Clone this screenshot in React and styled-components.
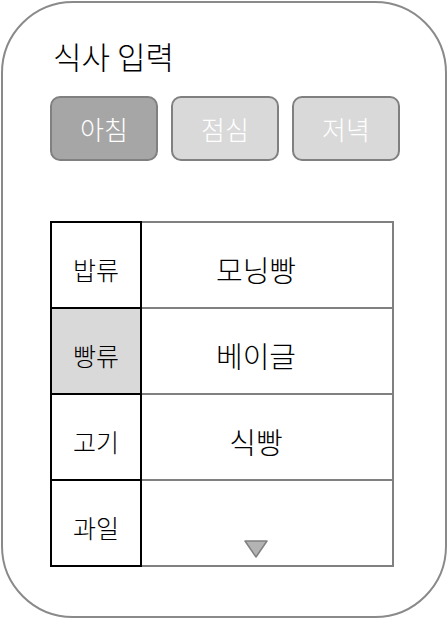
import styled, { createGlobalStyle } from "styled-components"

const GlobalStyle = createGlobalStyle`
    html, body {
        margin: 0;
        padding: 0;
        background: #ffffff;
    }
    body {
        font-family: "Noto Sans CJK KR", "Noto Sans", sans-serif;
        color: #000000;
    }
`

const meals = [
    { name: "아침", active: true },
    { name: "점심", active: false },
    { name: "저녁", active: false },
]

const foods = [
    { category: "밥류", item: "모닝빵" },
    { category: "빵류", item: "베이글", selected: true },
    { category: "고기", item: "식빵" },
    { category: "과일", item: "", dropdown: true },
]

export default function App() {
    return (
        <>
            <GlobalStyle />
            <Frame>
                <Title>식사 입력</Title>
                <MealTabs>
                    {meals.map((m) => (
                        <MealButton key={m.name} $active={m.active}>
                            {m.name}
                        </MealButton>
                    ))}
                </MealTabs>
                <FoodTable>
                    <tbody>
                        {foods.map((f) => (
                            <tr key={f.category}>
                                <Category $selected={f.selected}>{f.category}</Category>
                                <Item $dropdown={f.dropdown}>
                                    {f.dropdown ? (
                                        <DropdownArrow width="24" height="18" viewBox="0 0 24 18">
                                            <polygon
                                                points="1,1 23,1 12,17"
                                                fill="#b3b3b3"
                                                stroke="#808080"
                                                strokeWidth="1.5"
                                                strokeLinejoin="round"
                                            />
                                        </DropdownArrow>
                                    ) : (
                                        f.item
                                    )}
                                </Item>
                            </tr>
                        ))}
                    </tbody>
                </FoodTable>
            </Frame>
        </>
    )
}

const Frame = styled.div`
    box-sizing: border-box;
    margin: 1px;
    width: 446px;
    height: 617px;
    border: 2px solid #8a8a8a;
    border-radius: 72px;
    padding: 32px 0 0 47px;
`

const Title = styled.h1`
    margin: 0 0 0 3px;
    font-size: 31px;
    font-weight: 300;
    line-height: 42px;
`

const MealTabs = styled.div`
    display: flex;
    gap: 13px;
    margin-top: 19px;
`

const MealButton = styled.div`
    box-sizing: border-box;
    width: 108px;
    height: 65px;
    display: flex;
    align-items: center;
    justify-content: center;
    border: 2px solid #808080;
    border-radius: 10px;
    background: ${(p) => (p.$active ? "#a6a6a6" : "#d9d9d9")};
    color: #ffffff;
    font-size: 26px;
    font-weight: 300;
`

const FoodTable = styled.table`
    margin-top: 60px;
    margin-left: 0;
    border-collapse: collapse;
    table-layout: fixed;
    width: 344px;
`

const Category = styled.td`
    width: 88px;
    height: 76px;
    padding: 8px 0 0;
    border: 2px solid #000000;
    background: ${(p) => (p.$selected ? "#d9d9d9" : "#ffffff")};
    text-align: center;
    vertical-align: middle;
    font-size: 25px;
    font-weight: 300;
`

const Item = styled.td`
    height: ${(p) => (p.$dropdown ? "77px" : "76px")};
    padding: ${(p) => (p.$dropdown ? "0 22px 7px 0" : "8px 22px 0 0")};
    border: 2px solid #808080;
    text-align: center;
    vertical-align: ${(p) => (p.$dropdown ? "bottom" : "middle")};
    font-size: 29px;
    font-weight: 300;
`

const DropdownArrow = styled.svg`
    display: block;
    margin: 0 auto;
`
